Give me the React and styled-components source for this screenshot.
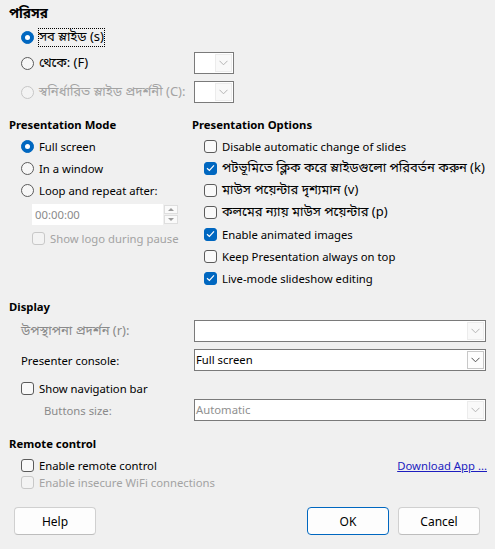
import React from 'react';
import styled, { createGlobalStyle } from 'styled-components';

const GlobalStyle = createGlobalStyle`
  html, body {
    margin: 0;
    padding: 0;
    background: #f0f0f0;
  }
  body {
    font-family: "Noto Sans", "Noto Sans Bengali", "Open Sans", sans-serif;
    font-size: 11.3px;
    color: #000;
  }
`;

const BLUE = '#0067c0';

// Bengali strings run a little wider in the original UI font
const Bn = styled.span`
  font-family: "Noto Sans Bengali", "Noto Sans", sans-serif;
  font-size: ${(p) => p.$size || 13}px;
`;

const Chevron = ({ color = '#8c8c8c' }) => (
  <svg width="9" height="6" viewBox="0 0 9 6">
    <polyline points="0.5,0.8 4.5,4.8 8.5,0.8" fill="none" stroke={color} strokeWidth="1" />
  </svg>
);

const Tick = () => (
  <svg width="9" height="8" viewBox="0 0 9 8">
    <polyline points="1,4.2 3.4,6.4 8,1.4" fill="none" stroke="#fff" strokeWidth="1.2" />
  </svg>
);

const Dialog = styled.div`
  width: 495px;
  height: 549px;
  box-sizing: border-box;
  padding: 6px 9px 0 9px;
  display: flex;
  flex-direction: column;
`;

const Heading = styled.div`
  font-weight: 700;
  height: 16px;
  line-height: 16px;
  margin-top: ${(p) => p.$top || 0}px;
  white-space: nowrap;
`;

const Indent = styled.div`
  padding-left: ${(p) => p.$left || 12}px;
  display: flex;
  flex-direction: column;
`;

const RangeRow = styled.div`
  display: grid;
  grid-template-columns: 173px 40px;
  align-items: center;
  height: 22px;
  margin-top: ${(p) => p.$top || 0}px;
`;

const Option = styled.label`
  display: flex;
  align-items: center;
  gap: 4px;
  height: ${(p) => p.$h || 22}px;
  color: ${(p) => (p.$disabled ? '#a3a3a3' : '#000')};
  white-space: nowrap;
`;

const Focus = styled.span`
  outline: 1px dotted #000;
  outline-offset: 0px;
  line-height: 16px;
`;

const RadioDot = styled.span`
  width: 13px;
  height: 13px;
  box-sizing: border-box;
  border-radius: 50%;
  flex: none;
  margin-right: 1px;
  border: 1px solid ${(p) => (p.$checked ? BLUE : p.$disabled ? '#c6c6c6' : '#5b5b5b')};
  background: ${(p) => (p.$checked ? BLUE : p.$disabled ? '#f3f3f3' : '#f7f7f7')};
  display: flex;
  align-items: center;
  justify-content: center;

  &::after {
    content: '';
    display: ${(p) => (p.$checked ? 'block' : 'none')};
    width: 5px;
    height: 5px;
    border-radius: 50%;
    background: #fff;
  }
`;

const Box = styled.span`
  width: 13px;
  height: 13px;
  box-sizing: border-box;
  border-radius: 3px;
  flex: none;
  margin-right: 1px;
  border: 1px solid ${(p) => (p.$checked ? BLUE : p.$disabled ? '#c8c8c8' : '#5b5b5b')};
  background: ${(p) => (p.$checked ? BLUE : p.$disabled ? '#f3f3f3' : '#f9f9f9')};
  display: flex;
  align-items: center;
  justify-content: center;
`;

const Radio = ({ checked, disabled, focus, children }) => (
  <Option $disabled={disabled}>
    <RadioDot $checked={checked} $disabled={disabled} />
    {focus ? <Focus>{children}</Focus> : children}
  </Option>
);

const Check = ({ checked, disabled, h, children }) => (
  <Option $disabled={disabled} $h={h}>
    <Box $checked={checked} $disabled={disabled}>{checked && <Tick />}</Box>
    {children}
  </Option>
);

const ComboBox = styled.div`
  height: ${(p) => p.$h || 22}px;
  box-sizing: border-box;
  border: 1px solid #7a7a7a;
  background: #fff;
  display: flex;
  align-items: stretch;
  color: ${(p) => (p.$disabled ? '#8f8f8f' : '#000')};
`;

const ComboText = styled.div`
  flex: 1;
  line-height: 20px;
  padding-left: 1px;
  white-space: nowrap;
`;

const ComboButton = styled.div`
  width: 17px;
  margin: 1px;
  box-sizing: border-box;
  border: 1px solid ${(p) => (p.$active ? '#c8c8c8' : '#ececec')};
  background: ${(p) => (p.$active ? '#fdfdfd' : '#f9f9f9')};
  display: flex;
  align-items: center;
  justify-content: center;
`;

// muted: the list is still empty, so the button looks inactive
const Combo = ({ text, disabled, muted }) => (
  <ComboBox $disabled={disabled}>
    <ComboText>{text}</ComboText>
    <ComboButton $active={!disabled && !muted}>
      <Chevron color={disabled || muted ? '#b4b4b4' : '#505050'} />
    </ComboButton>
  </ComboBox>
);

const Columns = styled.div`
  display: grid;
  grid-template-columns: 183px 1fr;
  margin-top: 14px;
`;

const Column = styled.div`
  display: flex;
  flex-direction: column;
`;

const RowList = styled.div`
  display: flex;
  flex-direction: column;
  padding-left: 12px;
  margin-top: 2px;
`;

const TimeField = styled.div`
  display: flex;
  margin: 3px 0 2px 11px;
  width: 146px;
  height: 21px;
`;

const TimeInput = styled.div`
  flex: 1;
  background: #fff;
  color: #8a8a8a;
  line-height: 21px;
  padding-left: 3px;
`;

const Spin = styled.div`
  width: 14px;
  margin-left: 1px;
  display: flex;
  flex-direction: column;
  gap: 1px;
  padding: 1px 0;
  box-sizing: border-box;
`;

const SpinPart = styled.div`
  flex: 1;
  border: 1px solid #dedede;
  background: #fafafa;
  display: flex;
  align-items: center;
  justify-content: center;

  &::after {
    content: '';
    border-left: 3px solid transparent;
    border-right: 3px solid transparent;
    ${(p) => (p.$down ? 'border-top: 3px solid #9a9a9a;' : 'border-bottom: 3px solid #9a9a9a;')}
  }
`;

const LogoRow = styled.div`
  padding-left: 11px;
`;

const DisplayGrid = styled.div`
  display: grid;
  grid-template-columns: 173px 292px;
  padding-left: 12px;
  margin-top: 5px;
  align-items: center;
`;

const FieldLabel = styled.div`
  color: ${(p) => (p.$muted ? '#8a8a8a' : '#000')};
  padding-left: ${(p) => p.$left || 0}px;
  white-space: nowrap;
  margin-top: ${(p) => p.$top || 0}px;
`;

const ComboCell = styled.div`
  margin-top: ${(p) => p.$top || 0}px;
`;

const Span2 = styled.div`
  grid-column: 1 / 3;
  margin-top: 6px;
`;

const RemoteRow = styled.div`
  display: flex;
  justify-content: space-between;
  align-items: center;
  padding-left: 12px;
  margin-top: ${(p) => p.$top || 0}px;
`;

const Link = styled.a`
  color: #1d1dbf;
  text-decoration: underline;
  margin-right: -1px;
  cursor: pointer;
`;

const Buttons = styled.div`
  display: flex;
  margin: 16px 6px 0 5px;
  gap: 9px;
`;

const Button = styled.button`
  width: 82px;
  height: 28px;
  font: inherit;
  font-size: 12px;
  color: #000;
  background: #fdfdfd;
  border: 1px solid ${(p) => (p.$default ? BLUE : '#d0d0d0')};
  border-bottom-color: ${(p) => (p.$default ? BLUE : '#bdbdbd')};
  border-radius: 4px;
  margin-left: ${(p) => (p.$push ? 'auto' : '0')};
  padding: 0;
`;

export default function App() {
  return (
    <>
      <GlobalStyle />
      <Dialog>
        <Heading><Bn $size={13.5}>পরিসর</Bn></Heading>
        <Indent>
          <RangeRow $top={4}>
            <Radio checked focus><Bn>সব স্লাইড (s)</Bn></Radio>
          </RangeRow>
          <RangeRow $top={4}>
            <Radio><Bn>থেকে: (F)</Bn></Radio>
            <Combo muted />
          </RangeRow>
          <RangeRow $top={7}>
            <Radio disabled><Bn>স্বনির্ধারিত স্লাইড প্রদর্শনী (C):</Bn></Radio>
            <Combo disabled />
          </RangeRow>
        </Indent>

        <Columns>
          <Column>
            <Heading>Presentation Mode</Heading>
            <RowList>
              <Radio checked>Full screen</Radio>
              <Radio>In a window</Radio>
              <Radio>Loop and repeat after:</Radio>
              <TimeField>
                <TimeInput>00:00:00</TimeInput>
                <Spin>
                  <SpinPart />
                  <SpinPart $down />
                </Spin>
              </TimeField>
              <LogoRow>
                <Check disabled>Show logo during pause</Check>
              </LogoRow>
            </RowList>
          </Column>
          <Column>
            <Heading>Presentation Options</Heading>
            <RowList>
              <Check>Disable automatic change of slides</Check>
              <Check checked><Bn>পটভূমিতে ক্লিক করে স্লাইডগুলো পরিবর্তন করুন (k)</Bn></Check>
              <Check><Bn>মাউস পয়েন্টার দৃশ্যমান (v)</Bn></Check>
              <Check><Bn>কলমের ন্যায় মাউস পয়েন্টার (p)</Bn></Check>
              <Check checked>Enable animated images</Check>
              <Check>Keep Presentation always on top</Check>
              <Check checked>Live-mode slideshow editing</Check>
            </RowList>
          </Column>
        </Columns>

        <Heading $top={10}>Display</Heading>
        <DisplayGrid>
          <FieldLabel $muted><Bn>উপস্থাপনা প্রদর্শন (r):</Bn></FieldLabel>
          <ComboCell>
            <Combo disabled />
          </ComboCell>
          <FieldLabel $top={7}>Presenter console:</FieldLabel>
          <ComboCell $top={7}>
            <Combo text="Full screen" />
          </ComboCell>
          <Span2>
            <Check>Show navigation bar</Check>
          </Span2>
          <FieldLabel $muted $left={23}>Buttons size:</FieldLabel>
          <ComboCell>
            <Combo text="Automatic" disabled />
          </ComboCell>
        </DisplayGrid>

        <Heading $top={15}>Remote control</Heading>
        <RemoteRow $top={5}>
          <Check h={17}>Enable remote control</Check>
          <Link>Download App ...</Link>
        </RemoteRow>
        <RemoteRow>
          <Check disabled h={17}>Enable insecure WiFi connections</Check>
        </RemoteRow>

        <Buttons>
          <Button>Help</Button>
          <Button $default $push>OK</Button>
          <Button>Cancel</Button>
        </Buttons>
      </Dialog>
    </>
  );
}
